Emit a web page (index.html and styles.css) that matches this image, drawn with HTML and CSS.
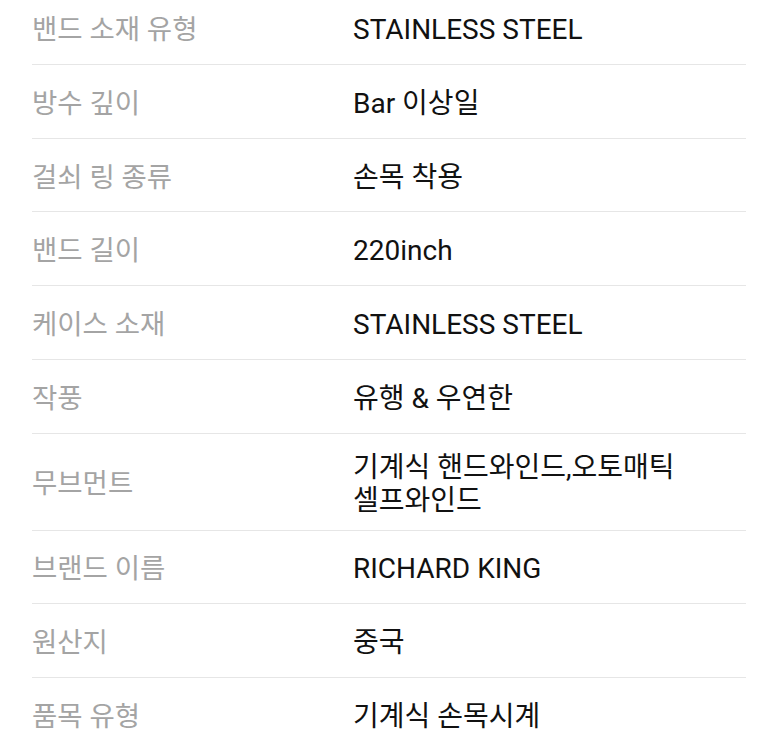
FILE: index.html
```html
<!DOCTYPE html>
<html lang="ko">
<head>
<meta charset="utf-8">
<link rel="stylesheet" href="styles.css">
</head>
<body>
<div class="specs">
  <div class="row"><div class="label">밴드 소재 유형</div><div class="value">STAINLESS STEEL</div></div>
  <div class="row"><div class="label">방수 깊이</div><div class="value">Bar 이상일</div></div>
  <div class="row"><div class="label">걸쇠 링 종류</div><div class="value">손목 착용</div></div>
  <div class="row"><div class="label">밴드 길이</div><div class="value">220inch</div></div>
  <div class="row"><div class="label">케이스 소재</div><div class="value">STAINLESS STEEL</div></div>
  <div class="row"><div class="label">작풍</div><div class="value">유행 &amp; 우연한</div></div>
  <div class="row"><div class="label">무브먼트</div><div class="value">기계식 핸드와인드,오토매틱 셀프와인드</div></div>
  <div class="row"><div class="label">브랜드 이름</div><div class="value">RICHARD KING</div></div>
  <div class="row"><div class="label">원산지</div><div class="value">중국</div></div>
  <div class="row"><div class="label">품목 유형</div><div class="value">기계식 손목시계</div></div>
</div>
</body>
</html>
```

FILE: styles.css
```css
html, body {
  margin: 0;
  padding: 0;
  background: #ffffff;
}

body {
  font-family: Roboto, "Noto Sans CJK KR", sans-serif;
  overflow: hidden;
}

.specs {
  margin-top: -8.6px;
  padding: 0 34px 0 32px;
}

.row {
  display: grid;
  grid-template-columns: 321px 1fr;
  align-items: center;
  box-sizing: border-box;
  min-height: 73.7px;
  padding: 17px 0 13px;
  border-bottom: 1px solid #e6e6e6;
}

.label {
  color: #a4a4a4;
  font-size: 27.5px;
  line-height: 33px;
}

.value {
  color: #111111;
  font-size: 28px;
  line-height: 33px;
  word-break: keep-all;
}
```
